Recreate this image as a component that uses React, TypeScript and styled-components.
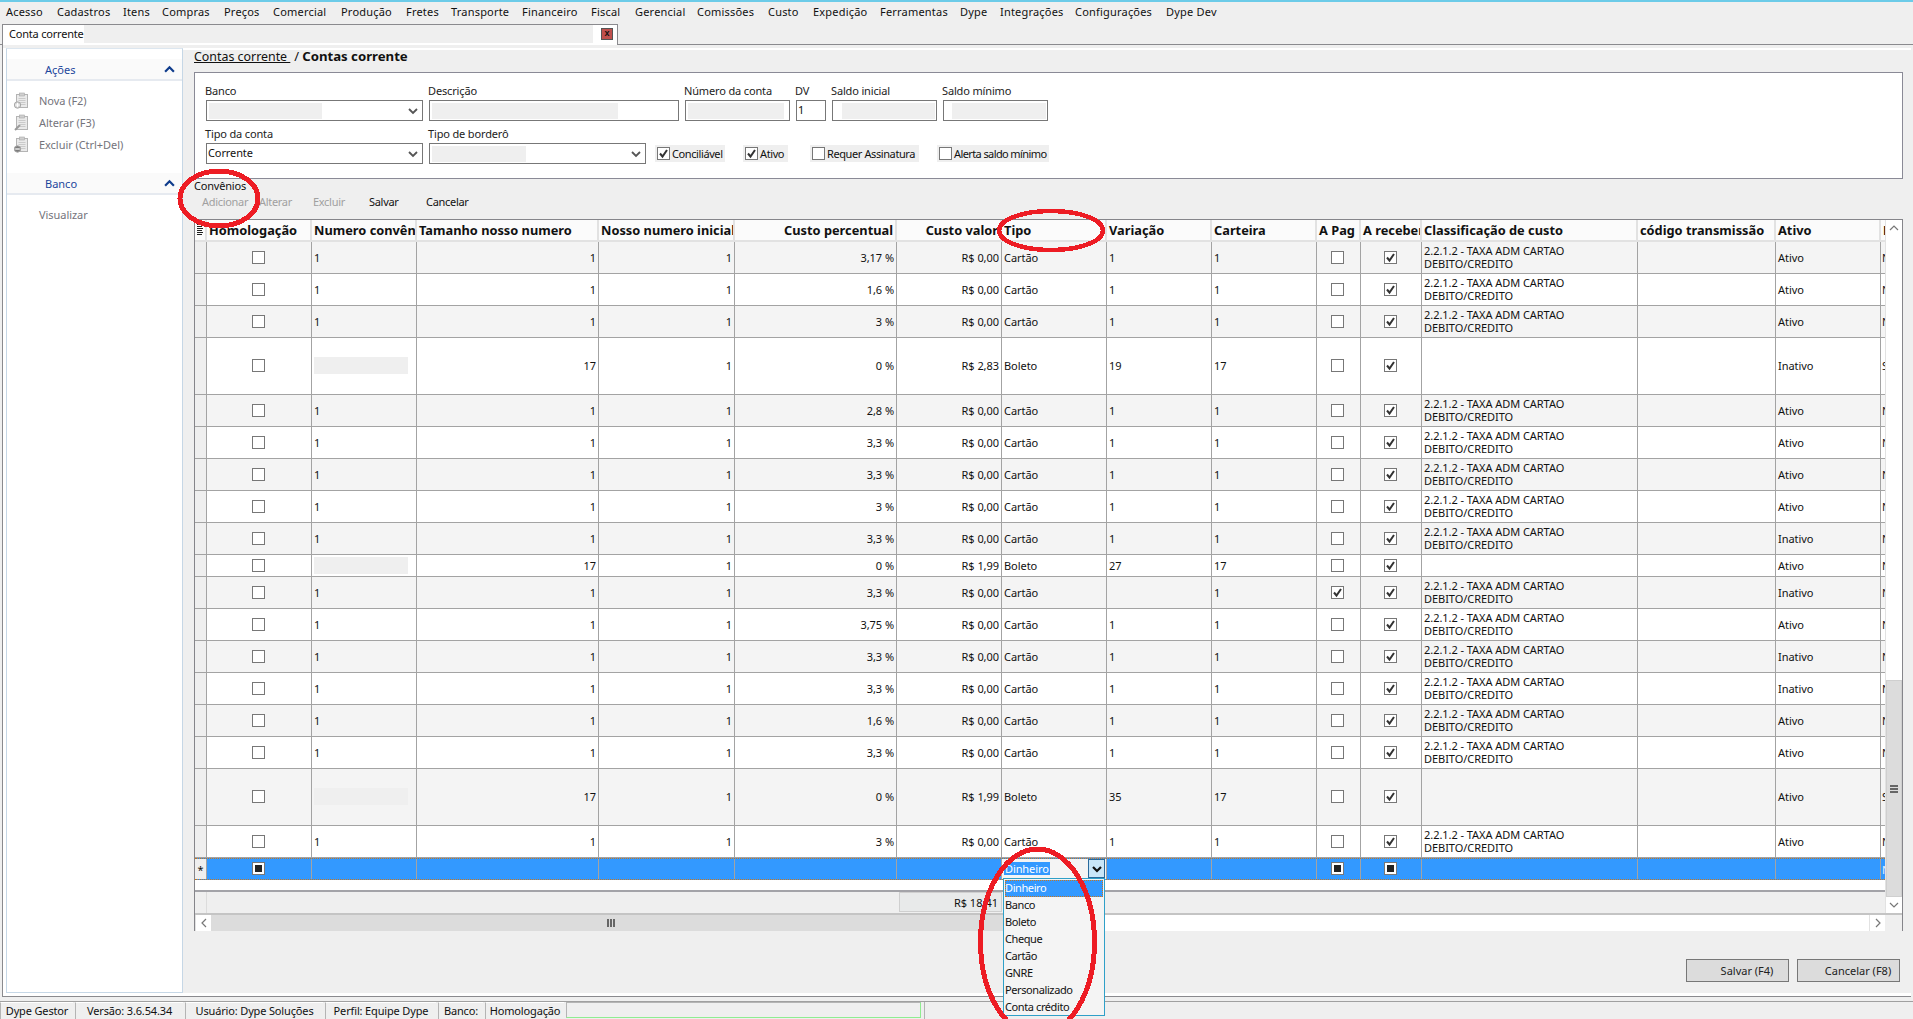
import React from 'react';
import styled, { createGlobalStyle } from 'styled-components';

const FONT = '"Noto Sans", "Open Sans", sans-serif';
const LINE = '#a3a3a3';
const COLS = '12px 105px 105px 182px 136px 162px 105px 105px 105px 105px 44px 61px 216px 138px 105px 100px';

const Global = createGlobalStyle`
  html, body { margin: 0; padding: 0; background: #efefef; }
  body { font-family: ${FONT}; font-size: 11px; color: #111; overflow: hidden; }
  * { box-sizing: border-box; }
`;

const Root = styled.div`
  position: relative; width: 1913px; height: 1019px; display: flex; flex-direction: column;
  background: #efefef; border-top: 2px solid #6ccbe8; overflow: hidden;
`;
const MenuBar = styled.nav`display: flex; height: 22px; align-items: center; padding-left: 6px; padding-bottom: 4px; flex: none;`;
const MenuItem = styled.span<{ $w: number }>`width: ${p => p.$w}px; flex: none; white-space: nowrap; font-size: 11px; letter-spacing: 0.2px;`;

const TabStrip = styled.div`height: 21px; flex: none; padding-left: 2px; border-bottom: 1px solid #8a8a8e;`;
const Tab = styled.div`
  width: 616px; height: 21px; background: #fff; border: 1px solid #8a8a8e; border-bottom: none;
  display: flex; align-items: flex-start; padding-left: 6px;
`;
const TabTitle = styled.span`width: 75px; flex: none; line-height: 18px; font-size: 11px; white-space: nowrap; letter-spacing: -0.2px;`;
const TabBlank = styled.div`width: 509px; height: 18px; flex: none; background: #efefef;`;
const CloseBtn = styled.div`
  width: 12px; height: 12px; margin: 3px 0 0 8px; flex: none; background: #c0504d; border: 1px solid #555;
  color: #111; font: bold 9px/9px "Liberation Sans", sans-serif; text-align: center;
`;

const TabPage = styled.div`
  flex: 1; min-height: 0; margin: 0 2px; padding-top: 3px;
  border-left: 1px solid #8a8a8e; border-bottom: 1px solid #8a8a8e;
  display: flex;
`;
const PageInner = styled.div`flex: 1; min-width: 0; background: #fff; display: flex; padding: 0 0 3px 3px;`;

const Sidebar = styled.aside`width: 177px; flex: none; background: #fff; border: 1px solid #c6d7e6; padding-top: 10px; border-top-color: #dce6ef;`;
const SideHeader = styled.div`
  height: 22px; background: #fafafa; border-bottom: 2px solid #e6eaf0; display: flex; align-items: center;
  justify-content: space-between; padding: 0 7px 0 38px; color: #1c469c; font-size: 11px;
`;
const SideList = styled.div`padding: 9px 0 17px; display: flex; flex-direction: column;`;
const SideItem = styled.div`height: 22px; display: flex; align-items: center; padding: 0 0 1px 7px; color: #74747c; font-size: 11px; letter-spacing: -0.05px;`;
const SideIconSlot = styled.span`width: 25px; flex: none; display: flex;`;

const Main = styled.main`flex: 1; min-width: 0; margin-top: 2px; background: #efefef; padding: 0 8px 0 11px;`;
const Breadcrumb = styled.div`height: 22px; font-size: 12.4px; line-height: 12px;`;
const CrumbLink = styled.span`text-decoration: underline;`;
const CrumbSep = styled.span`margin: 0 3px 0 4px; font-size: 13px;`;
const CrumbNow = styled.strong`font-weight: 700; font-size: 13.2px;`;

const FormBox = styled.section`
  height: 107px; background: #fff; border: 1px solid #8a8a96; padding: 12px 0 0 11px;
  display: flex; flex-direction: column; gap: 7px;
`;
const FormRow = styled.div`display: flex; gap: 6px; align-items: flex-end;`;
const Field = styled.label<{ $w: number }>`width: ${p => p.$w}px; flex: none; display: flex; flex-direction: column; gap: 2px;`;
const FieldLabel = styled.span`height: 13px; line-height: 11px; margin-left: -1px; font-size: 11px; color: #222; white-space: nowrap; letter-spacing: -0.15px;`;
const Control = styled.div`
  height: 21px; border: 1px solid #777; background: #fff; display: flex; align-items: center;
  justify-content: space-between; padding: 0 4px 0 2px; font-size: 11px; line-height: 12px; letter-spacing: -0.1px;
`;
const ControlText = styled.span`margin: -2px 0 0 -1px;`;
const Redacted = styled.span<{ $w: number; $ml?: number }>`
  width: ${p => p.$w}px; height: 16px; margin-left: ${p => p.$ml ?? 0}px; background: #efefef; flex: none; display: block;
`;
const CheckTag = styled.label<{ $w: number; $ml: number; $ls?: number }>`
  width: ${p => p.$w}px; margin-left: ${p => p.$ml}px; height: 17px; margin-bottom: 2px; flex: none; background: #efefef;
  display: flex; align-items: center; gap: 2px; padding-left: 2px; font-size: 11px; white-space: nowrap;
  letter-spacing: ${p => p.$ls ?? -0.4}px; line-height: 12px;
`;
const Box = styled.span`
  width: 13px; height: 13px; border: 1px solid #777; background: #fff; flex: none;
  display: inline-flex; align-items: center; justify-content: center;
`;
const Dot = styled.span`width: 7px; height: 7px; background: #222;`;

const SectionTitle = styled.div`height: 14px; line-height: 14px; font-size: 11px; letter-spacing: -0.2px;`;
const Toolbar = styled.div`display: flex; height: 26px; padding: 2px 0 0 8px; flex: none;`;
const ToolBtn = styled.span<{ $w: number; $off?: boolean }>`
  width: ${p => p.$w}px; flex: none; line-height: 14px; font-size: 11px; letter-spacing: -0.3px; color: ${p => (p.$off ? '#a0a0a0' : '#111')};
`;

const Grid = styled.section`height: 712px; border: 1px solid #85858a; display: flex; flex-direction: column; background: #fff;`;
const GridBody = styled.div`height: 693px; flex: none; display: flex;`;
const GridContent = styled.div`flex: 1; min-width: 0; overflow: hidden; display: flex; flex-direction: column;`;
const HeaderRow = styled.div`display: grid; grid-template-columns: ${COLS}; height: 22px; flex: none; background: #fbfbfb; border-bottom: 2px solid #e2e2e2;`;
const HeaderCell = styled.div<{ $right?: boolean }>`
  font-size: 12.8px; font-weight: 700; line-height: 21px; color: #111; white-space: nowrap; overflow: hidden;
  border-right: 2px solid #e2e2e2; padding: 0 2px; text-align: ${p => (p.$right ? 'right' : 'left')};
  direction: ${p => (p.$right ? 'rtl' : 'ltr')};
`;
const CornerCell = styled.div`border-right: 2px solid #e2e2e2; display: flex; padding: 4px 0 0 2px; background: #fbfbfb;`;
const Row = styled.div<{ $h: number; $odd?: boolean; $selected?: boolean }>`
  display: grid; grid-template-columns: ${COLS}; height: ${p => p.$h}px; flex: none;
  background: ${p => (p.$selected ? '#3399ff' : p.$odd ? '#f4f4f4' : '#fff')};
  border-bottom: 1px ${p => (p.$selected ? 'dotted #c8761e' : `solid ${LINE}`)};
  border-top: ${p => (p.$selected ? '1px dotted #c8761e' : 'none')};
`;
const RowHead = styled.div`background: #efefef; border-right: 1px solid ${LINE}; display: flex; align-items: center; justify-content: center; font-size: 11px;`;
const Cell = styled.div<{ $right?: boolean; $center?: boolean; $light?: boolean; $lift?: boolean }>`
  border-right: 1px solid ${LINE}; display: flex; align-items: center; overflow: hidden; font-size: 11px;
  padding: 0 ${p => (p.$center ? 3 : 2)}px ${p => (p.$lift ? 2 : 0)}px ${p => (p.$center ? 1 : 2)}px;
  line-height: 13px; letter-spacing: -0.05px; color: ${p => (p.$light ? '#e8f2ff' : '#111')};
  justify-content: ${p => (p.$right ? 'flex-end' : p.$center ? 'center' : 'flex-start')};
`;
const LastCell = styled(Cell)`border-right: none; padding-left: 1px;`;
const ClassText = styled.span`margin-top: -2px;`;
const CellBlank = styled.span`width: 94px; height: 17px; background: #efefef; display: block; flex: none;`;
const RowFill = styled.div`flex: 1; background: #fff;`;
const ComboCell = styled.div`border-right: 1px solid ${LINE}; background: #f4f4f4; display: flex; align-items: center; justify-content: space-between; padding: 0 1px 1px 2px;`;
const ComboValue = styled.span`background: #3399ff; color: #fff; font-size: 11px; line-height: 13px; padding: 0 1px; letter-spacing: -0.1px;`;
const ComboArrow = styled.span`width: 17px; height: 19px; background: #c9e6f8; border: 1px solid #2a6a9c; display: flex; align-items: center; justify-content: center;`;

const VScroll = styled.div`width: 17px; flex: none; display: flex; flex-direction: column; background: #fff; border-left: 1px solid #e2e2e2;`;
const ArrowBtn = styled.span`width: 16px; height: 16px; flex: none; background: #fff; display: flex; align-items: center; justify-content: center;`;
const VTrack = styled.div`height: 444px; flex: none; background: #fff;`;
const VThumb = styled.div`flex: 1; background: #dcdcdc; border: 1px solid #cfcfcf; display: flex; align-items: center; justify-content: center;`;

const SumLine = styled.div`
  height: 23px; flex: none; border-top: 2px solid #a3a3a8; background: #efefef;
  display: grid; grid-template-columns: ${COLS};
`;
const SumHead = styled.div`border-right: 1px solid #dcdcdc;`;
const SumCell = styled.div`
  grid-column: 7; margin: 0 0 1px 2px; background: #e8eaea; border: 1px solid #cfcfcf; display: flex; align-items: center; justify-content: flex-end;
  padding-right: 3px; font-size: 11px;
`;
const HScroll = styled.div`height: 18px; flex: none; display: flex; border-top: 2px solid #c4c4c4; background: #fff;`;
const HBtn = styled.span`width: 16px; flex: none; background: #fff; border-left: 1px solid #e2e2e2; display: flex; align-items: center; justify-content: center;`;
const HThumb = styled.div`width: 800px; flex: none; background: #dcdcdc; display: flex; align-items: center; justify-content: center;`;
const HTrack = styled.div`flex: 1;`;
const HCorner = styled.div`width: 17px; flex: none; background: #efefef;`;

const FooterBar = styled.div`display: flex; justify-content: flex-end; gap: 8px; margin-top: 28px; padding-right: 3px;`;
const FooterBtn = styled.button`
  width: 103px; height: 23px; padding: 0 0 0 19px; background: #dcdcdc; border: 1px solid #777; font: 11px ${FONT}; color: #222;
`;

const StatusBar = styled.footer`height: 18px; margin-top: 4px; flex: none; display: flex; border-top: 1px solid #a0a0a0;`;
const StatusCell = styled.div<{ $w: number }>`
  width: ${p => p.$w}px; flex: none; margin-right: 2px; border-left: 1px solid #b4b4b4; border-top: 1px solid #fff;
  text-align: center; font-size: 11px; line-height: 16px; white-space: nowrap; letter-spacing: -0.15px;
`;
const Progress = styled.div`width: 355px; flex: none; margin-right: 3px; border: 1px solid; border-color: #b4b4b4 #90ec90 #90ec90 #b4b4b4; height: 16px;`;
const StatusRest = styled.div`flex: 1; border-left: 1px solid #b4b4b4;`;

const DropList = styled.ul`
  position: absolute; left: 1003px; top: 876px; width: 102px; height: 138px; margin: 0; padding: 1px; list-style: none;
  background: #f4f4f4; border: 1px solid #2fa0c8; z-index: 2;
`;
const DropItem = styled.li<{ $active?: boolean }>`
  height: 17px; line-height: 16px; padding-left: 0; font-size: 11px; white-space: nowrap; letter-spacing: -0.4px;
  background: ${p => (p.$active ? '#3399ff' : 'transparent')}; color: ${p => (p.$active ? '#fff' : '#111')};
  outline: ${p => (p.$active ? '1px dotted #c8761e' : 'none')}; outline-offset: -1px;
`;
const Marks = styled.svg`position: absolute; left: 0; top: -2px; width: 1913px; height: 1019px; pointer-events: none; z-index: 3;`;

const Chevron = ({ dir, color = '#777', size = 10, weight = 1.2 }: { dir: 'up' | 'down' | 'left' | 'right'; color?: string; size?: number; weight?: number }) => {
  const d = { up: 'M1 7 L5 3 L9 7', down: 'M1 3 L5 7 L9 3', left: 'M7 1 L3 5 L7 9', right: 'M3 1 L7 5 L3 9' }[dir];
  return <svg width={size} height={size} viewBox="0 0 10 10" fill="none"><path d={d} stroke={color} strokeWidth={weight} /></svg>;
};
const Tick = () => (
  <svg width="11" height="11" viewBox="0 0 11 11" fill="none"><path d="M2 5.5 L4.5 8.5 L9 2" stroke="#333" strokeWidth="2" /></svg>
);
const Check = ({ state }: { state: 'off' | 'on' | 'mixed' }) => (
  <Box>{state === 'on' ? <Tick /> : state === 'mixed' ? <Dot /> : null}</Box>
);
const Grip = ({ vertical }: { vertical?: boolean }) => (
  <svg width="10" height="10" viewBox="0 0 10 10" fill="#666">
    {vertical
      ? <g><rect x="1" y="1" width="8" height="2" /><rect x="1" y="4" width="8" height="2" /><rect x="1" y="7" width="8" height="2" /></g>
      : <g><rect x="1" y="1" width="2" height="8" /><rect x="4" y="1" width="2" height="8" /><rect x="7" y="1" width="2" height="8" /></g>}
  </svg>
);
const ClipIcon = ({ badge }: { badge: 'plus' | 'pen' | 'minus' }) => (
  <svg width="15" height="17" viewBox="0 0 15 17">
    <rect x="2.5" y="2.5" width="11" height="13" fill="#eaeaea" stroke="#b4b4b4" />
    <rect x="5.5" y="1" width="5" height="3" fill="#cfcfcf" stroke="#a8a8a8" strokeWidth=".6" />
    <path d="M4.5 6.5h7M4.5 8.5h7M6 10.5h5.5M6 12.5h5.5" stroke="#cacaca" />
    {badge === 'pen'
      ? <path d="M1 16 L6 11" stroke="#9a9a9a" strokeWidth="2" />
      : <circle cx="3.5" cy="13" r="3.2" fill={badge === 'minus' ? '#7c7c7c' : '#d8d8d8'} stroke="#a8a8a8" />}
    {badge === 'minus' && <rect x="1.2" y="12.3" width="4.6" height="1.4" fill="#eee" />}
    {badge === 'plus' && <path d="M3.5 11v4M1.5 13h4" stroke="#fff" />}
  </svg>
);
const ListGlyph = () => (
  <svg width="6" height="12" viewBox="0 0 6 12" fill="#222">
    {[0, 2, 4, 6, 8, 10].map(y => <rect key={y} x="0" y={y} width={y % 4 === 0 ? 6 : 5} height="1" />)}
  </svg>
);

const menu: [string, number][] = [
  ['Acesso', 51], ['Cadastros', 66], ['Itens', 39], ['Compras', 62], ['Preços', 49], ['Comercial', 68], ['Produção', 65],
  ['Fretes', 45], ['Transporte', 71], ['Financeiro', 69], ['Fiscal', 44], ['Gerencial', 62], ['Comissões', 71], ['Custo', 45],
  ['Expedição', 67], ['Ferramentas', 80], ['Dype', 40], ['Integrações', 75], ['Configurações', 91], ['Dype Dev', 70],
];

const CLASS = '2.2.1.2 - TAXA ADM CARTAO DEBITO/CREDITO';
type R = { pct: string; val?: string; boleto?: boolean; v?: string; pay?: boolean; st?: string; h?: number };
const rows: R[] = [
  { pct: '3,17' }, { pct: '1,6' }, { pct: '3' },
  { pct: '0', val: '2,83', boleto: true, v: '19', st: 'Inativo', h: 57 },
  { pct: '2,8' }, { pct: '3,3' }, { pct: '3,3' }, { pct: '3' }, { pct: '3,3', st: 'Inativo' },
  { pct: '0', val: '1,99', boleto: true, v: '27', h: 22 },
  { pct: '3,3', v: '', pay: true, st: 'Inativo' }, { pct: '3,75' }, { pct: '3,3', st: 'Inativo' }, { pct: '3,3', st: 'Inativo' },
  { pct: '1,6' }, { pct: '3,3' },
  { pct: '0', val: '1,99', boleto: true, v: '35', h: 57 },
  { pct: '3' },
];

const headers: [string, boolean?][] = [
  ['Homologação'], ['Numero convênio'], ['Tamanho nosso numero'], ['Nosso numero inicial'], ['Custo percentual', true], ['Custo valor', true],
  ['Tipo'], ['Variação'], ['Carteira'], ['A Pag'], ['A receber'], ['Classificação de custo'], ['código transmissão'], ['Ativo'], ['Padrão'],
];

const options = ['Dinheiro', 'Banco', 'Boleto', 'Cheque', 'Cartão', 'GNRE', 'Personalizado', 'Conta crédito'];

export default function App() {
  return (
    <Root>
      <Global />
      <MenuBar>{menu.map(([t, w]) => <MenuItem key={t} $w={w}>{t}</MenuItem>)}</MenuBar>
      <TabStrip>
        <Tab>
          <TabTitle>Conta corrente</TabTitle>
          <TabBlank />
          <CloseBtn>x</CloseBtn>
        </Tab>
      </TabStrip>
      <TabPage>
        <PageInner>
          <Sidebar>
            <SideHeader>Ações<Chevron dir="up" color="#0f3c8c" size={11} weight={2} /></SideHeader>
            <SideList>
              <SideItem><SideIconSlot><ClipIcon badge="plus" /></SideIconSlot>Nova (F2)</SideItem>
              <SideItem><SideIconSlot><ClipIcon badge="pen" /></SideIconSlot>Alterar (F3)</SideItem>
              <SideItem><SideIconSlot><ClipIcon badge="minus" /></SideIconSlot>Excluir (Ctrl+Del)</SideItem>
            </SideList>
            <SideHeader>Banco<Chevron dir="up" color="#0f3c8c" size={11} weight={2} /></SideHeader>
            <SideList>
              <SideItem><SideIconSlot />Visualizar</SideItem>
            </SideList>
          </Sidebar>
          <Main>
            <Breadcrumb>
              <CrumbLink>Contas corrente&nbsp;</CrumbLink><CrumbSep>/</CrumbSep><CrumbNow>Contas corrente</CrumbNow>
            </Breadcrumb>
            <FormBox>
              <FormRow>
                <Field $w={217}><FieldLabel>Banco</FieldLabel><Control><Redacted $w={113} /><Chevron dir="down" color="#555" weight={1.8} /></Control></Field>
                <Field $w={250}><FieldLabel>Descrição</FieldLabel><Control><Redacted $w={186} /></Control></Field>
                <Field $w={105}><FieldLabel>Número da conta</FieldLabel><Control><Redacted $w={96} /></Control></Field>
                <Field $w={30}><FieldLabel>DV</FieldLabel><Control><ControlText>1</ControlText></Control></Field>
                <Field $w={105}><FieldLabel>Saldo inicial</FieldLabel><Control><Redacted $w={93} $ml={7} /></Control></Field>
                <Field $w={105}><FieldLabel>Saldo mínimo</FieldLabel><Control><Redacted $w={94} $ml={6} /></Control></Field>
              </FormRow>
              <FormRow>
                <Field $w={217}><FieldLabel>Tipo da conta</FieldLabel><Control><ControlText>Corrente</ControlText><Chevron dir="down" color="#555" weight={1.8} /></Control></Field>
                <Field $w={217}><FieldLabel>Tipo de borderô</FieldLabel><Control><Redacted $w={94} /><Chevron dir="down" color="#555" weight={1.8} /></Control></Field>
                <CheckTag $w={70} $ml={3}><Check state="on" />Conciliável</CheckTag>
                <CheckTag $w={45} $ml={12}><Check state="on" />Ativo</CheckTag>
                <CheckTag $w={109} $ml={16}><Check state="off" />Requer Assinatura</CheckTag>
                <CheckTag $w={112} $ml={12} $ls={-0.6}><Check state="off" />Alerta saldo mínimo</CheckTag>
              </FormRow>
            </FormBox>
            <SectionTitle>Convênios</SectionTitle>
            <Toolbar>
              <ToolBtn $w={57} $off>Adicionar</ToolBtn>
              <ToolBtn $w={54} $off>Alterar</ToolBtn>
              <ToolBtn $w={56} $off>Excluir</ToolBtn>
              <ToolBtn $w={57}>Salvar</ToolBtn>
              <ToolBtn $w={60}>Cancelar</ToolBtn>
            </Toolbar>
            <Grid>
              <GridBody>
                <GridContent>
                  <HeaderRow>
                    <CornerCell><ListGlyph /></CornerCell>
                    {headers.map(([t, r]) => <HeaderCell key={t} $right={r}>{t}</HeaderCell>)}
                  </HeaderRow>
                  {rows.map((r, i) => {
                    const tall = r.h === 57;
                    return (
                      <Row key={i} $h={r.h ?? 32} $odd={i % 2 === 0}>
                        <RowHead />
                        <Cell $center $lift={tall}><Check state="off" /></Cell>
                        <Cell $lift={tall}>{r.boleto ? <CellBlank /> : '1'}</Cell>
                        <Cell $right $lift={tall}>{r.boleto ? '17' : '1'}</Cell>
                        <Cell $right $lift={tall}>1</Cell>
                        <Cell $right $lift={tall}>{r.pct} %</Cell>
                        <Cell $right $lift={tall}>R$ {r.val ?? '0,00'}</Cell>
                        <Cell $lift={tall}>{r.boleto ? 'Boleto' : 'Cartão'}</Cell>
                        <Cell $lift={tall}>{r.v ?? '1'}</Cell>
                        <Cell $lift={tall}>{r.boleto ? '17' : '1'}</Cell>
                        <Cell $center $lift={tall}><Check state={r.pay ? 'on' : 'off'} /></Cell>
                        <Cell $center $lift={tall}><Check state="on" /></Cell>
                        <Cell>{r.boleto ? '' : <ClassText>{CLASS}</ClassText>}</Cell>
                        <Cell />
                        <Cell $lift={tall}>{r.st ?? 'Ativo'}</Cell>
                        <LastCell $lift={tall}>{tall ? 'S' : 'N'}</LastCell>
                      </Row>
                    );
                  })}
                  <Row $h={22} $selected>
                    <RowHead>*</RowHead>
                    <Cell $center $lift><Check state="mixed" /></Cell>
                    <Cell /><Cell /><Cell /><Cell /><Cell />
                    <ComboCell>
                      <ComboValue>Dinheiro</ComboValue>
                      <ComboArrow><Chevron dir="down" color="#111" weight={2.2} /></ComboArrow>
                    </ComboCell>
                    <Cell /><Cell />
                    <Cell $center $lift><Check state="mixed" /></Cell>
                    <Cell $center $lift><Check state="mixed" /></Cell>
                    <Cell /><Cell /><Cell />
                    <LastCell $light>N</LastCell>
                  </Row>
                  <RowFill />
                  <SumLine>
                    <SumHead />
                    <SumCell>R$ 18,41</SumCell>
                  </SumLine>
                </GridContent>
                <VScroll>
                  <ArrowBtn><Chevron dir="up" /></ArrowBtn>
                  <VTrack />
                  <VThumb><Grip vertical /></VThumb>
                  <ArrowBtn><Chevron dir="down" /></ArrowBtn>
                </VScroll>
              </GridBody>
              <HScroll>
                <HBtn><Chevron dir="left" /></HBtn>
                <HThumb><Grip /></HThumb>
                <HTrack />
                <HBtn><Chevron dir="right" /></HBtn>
                <HCorner />
              </HScroll>
            </Grid>
            <FooterBar>
              <FooterBtn>Salvar (F4)</FooterBtn>
              <FooterBtn>Cancelar (F8)</FooterBtn>
            </FooterBar>
          </Main>
        </PageInner>
      </TabPage>
      <StatusBar>
        <StatusCell $w={73}>Dype Gestor</StatusCell>
        <StatusCell $w={108}>Versão: 3.6.54.34</StatusCell>
        <StatusCell $w={138}>Usuário: Dype Soluções</StatusCell>
        <StatusCell $w={111}>Perfil: Equipe Dype</StatusCell>
        <StatusCell $w={45}>Banco:</StatusCell>
        <StatusCell $w={79}>Homologação</StatusCell>
        <Progress />
        <StatusRest />
      </StatusBar>
      <DropList>
        {options.map((o, i) => <DropItem key={o} $active={i === 0}>{o}</DropItem>)}
      </DropList>
      <Marks viewBox="0 0 1913 1019" fill="none" stroke="#ed1c24" shapeRendering="crispEdges">
        <ellipse cx="219" cy="198.5" rx="39" ry="27.5" strokeWidth="5" />
        <ellipse cx="1051" cy="230.5" rx="52" ry="19.5" strokeWidth="4.5" />
        <ellipse cx="1037.5" cy="942" rx="57" ry="93" strokeWidth="5" />
      </Marks>
    </Root>
  );
}
